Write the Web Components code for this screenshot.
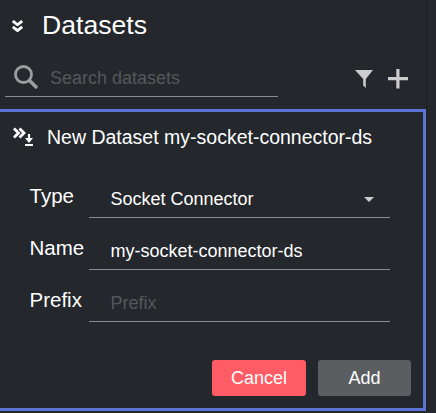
<!DOCTYPE html>
<html>
<head>
<meta charset="utf-8">
<style>
    html, body { margin: 0; height: 100%; background: #24272c; overflow: hidden; }
    body { font-family: "Liberation Sans", Arial, sans-serif; color: #fff; }
</style>
</head>
<body>
<dataset-pane>
    <pane-header slot="header">Datasets</pane-header>
    <search-bar slot="search" placeholder="Search datasets"></search-bar>
    <new-dataset-form slot="form" title-text="New Dataset my-socket-connector-ds">
        <form-row label="Type"><select-box value="Socket Connector"></select-box></form-row>
        <form-row label="Name"><text-box value="my-socket-connector-ds"></text-box></form-row>
        <form-row label="Prefix"><text-box placeholder="Prefix"></text-box></form-row>
        <app-button slot="actions" color="#ff5c65" width="94">Cancel</app-button>
        <app-button slot="actions" color="#5b5e61" width="93">Add</app-button>
    </new-dataset-form>
</dataset-pane>

<script>
    class DatasetPane extends HTMLElement {
        constructor() {
            super();
            this.attachShadow({mode: 'open'}).innerHTML = `
            <style>
                :host { display: flex; flex-direction: column; width: 426px; height: 411px; border-right: 2px solid #202328; }
            </style>
            <slot name="header"></slot>
            <slot name="search"></slot>
            <slot name="form"></slot>`;
        }
    }

    class PaneHeader extends HTMLElement {
        constructor() {
            super();
            this.attachShadow({mode: 'open'}).innerHTML = `
            <style>
                :host { display: flex; align-items: center; height: 51px; padding-left: 12px; font-size: 26.6px; gap: 19px; }
                svg { width: 11px; height: 12px; margin-top: 1px; }
            </style>
            <svg viewBox="0 0 11 12" fill="none" stroke="#fff" stroke-width="2.800">
                <path d="M.8 1 5.500 4.800 10.200 1"/>
                <path d="M.8 6.800 5.500 10.600 10.200 6.800"/>
            </svg>
            <slot></slot>`;
        }
    }

    class SearchBar extends HTMLElement {
        constructor() {
            super();
            const placeholder = this.getAttribute('placeholder');
            this.attachShadow({mode: 'open'}).innerHTML = `
            <style>
                :host { display: flex; align-items: flex-start; height: 58px; padding-left: 5px; }
                .field { display: flex; align-items: center; width: 273px; height: 46px; box-sizing: border-box; border-bottom: 1px solid #8a8c8e; gap: 12px; padding: 10px 0 0 9px; }
                .field svg { width: 24px; height: 24px; margin-bottom: 4px; }
                .text { color: #55585b; font-size: 18px; }
                .tools { display: flex; align-items: center; margin-left: 77px; height: 56px; gap: 15px; }
            </style>
            <div class="field">
                <svg viewBox="0 0 24 24" fill="none" stroke="#9c9d9e">
                    <circle cx="9.500" cy="9.500" r="8" stroke-width="2.800"/>
                    <path d="M15.500 15.500 23 23" stroke-width="3.500"/>
                </svg>
                <span class="text">${placeholder}</span>
            </div>
            <div class="tools">
                <svg width="18" height="18" viewBox="0 0 18 18"><path fill="#ccc" d="M0 0H18L10.800 9V18L8.200 15.500V9Z"/></svg>
                <svg width="20" height="20" viewBox="0 0 20 20"><path fill="#ccc" d="M8.300 0H11.500V8H20V11.200H11.500V19.500H8.300V11.200H0V8H8.300Z"/></svg>
            </div>`;
        }
    }

    class NewDatasetForm extends HTMLElement {
        constructor() {
            super();
            const title = this.getAttribute('title-text');
            this.attachShadow({mode: 'open'}).innerHTML = `
            <style>
                :host { display: block; flex: 1; margin-left: -3px; border: 3px solid #5a75d5; padding: 0 12px 0 30px; }
                .title { display: flex; align-items: center; height: 50px; margin-left: -17px; gap: 14px; font-size: 19.500px; }
                .rows { display: flex; flex-direction: column; margin-top: 10px; }
                .actions { display: flex; justify-content: flex-end; gap: 12px; margin-top: 32px; }
            </style>
            <div class="title">
                <svg width="20" height="20" viewBox="0 0 20 20" fill="none" stroke="#fff" stroke-width="2.800">
                    <path d="M1 1.500 5.500 6 1 10.500"/>
                    <path d="M6.500 1.500 11 6 6.500 10.500"/>
                    <path d="M16 7V12" stroke-width="2.200"/>
                    <path fill="#fff" stroke="none" d="M12 11H20L16 16Z"/>
                    <path d="M12 18H20" stroke-width="2"/>
                </svg>
                <span>${title}</span>
            </div>
            <div class="rows"><slot></slot></div>
            <div class="actions"><slot name="actions"></slot></div>`;
        }
    }

    class FormRow extends HTMLElement {
        constructor() {
            super();
            const label = this.getAttribute('label');
            this.attachShadow({mode: 'open'}).innerHTML = `
            <style>
                :host { display: grid; grid-template-columns: 59px 301px; height: 52px; font-size: 20.500px; }
                label { padding-top: 12px; margin-left: -.5px; }
            </style>
            <label>${label}</label>
            <slot></slot>`;
        }
    }

    class TextBox extends HTMLElement {
        constructor() {
            super();
            const value = this.getAttribute('value');
            const placeholder = this.getAttribute('placeholder');
            this.attachShadow({mode: 'open'}).innerHTML = `
            <style>
                :host { display: flex; align-items: center; height: 40px; margin-top: 6px; padding: 3px 0 0 21.500px; box-sizing: border-box; border-bottom: 1px solid #8a8c8e; font-size: 18px; }
                .empty { color: #55585b; }
            </style>
            <span class="${value ? '' : 'empty'}">${value || placeholder}</span>`;
        }
    }

    class SelectBox extends HTMLElement {
        constructor() {
            super();
            const value = this.getAttribute('value');
            this.attachShadow({mode: 'open'}).innerHTML = `
            <style>
                :host { display: flex; align-items: center; justify-content: space-between; height: 40px; margin-top: 6px; padding: 3px 16px 0 21.500px; box-sizing: border-box; border-bottom: 1px solid #8a8c8e; font-size: 18px; }
                .arrow { width: 0; height: 0; border: 5px solid transparent; border-top: 5px solid #ccc; border-bottom: 0; }
            </style>
            <span>${value}</span>
            <span class="arrow"></span>`;
        }
    }

    class AppButton extends HTMLElement {
        constructor() {
            super();
            const color = this.getAttribute('color');
            const width = this.getAttribute('width');
            this.attachShadow({mode: 'open'}).innerHTML = `
            <style>
                :host { display: flex; align-items: center; justify-content: center; width: ${width}px; height: 36px; background: ${color}; border-radius: 3px; font-size: 18px; }
            </style>
            <slot></slot>`;
        }
    }

    customElements.define('dataset-pane', DatasetPane);
    customElements.define('pane-header', PaneHeader);
    customElements.define('search-bar', SearchBar);
    customElements.define('new-dataset-form', NewDatasetForm);
    customElements.define('form-row', FormRow);
    customElements.define('text-box', TextBox);
    customElements.define('select-box', SelectBox);
    customElements.define('app-button', AppButton);
</script>
</body>
</html>
